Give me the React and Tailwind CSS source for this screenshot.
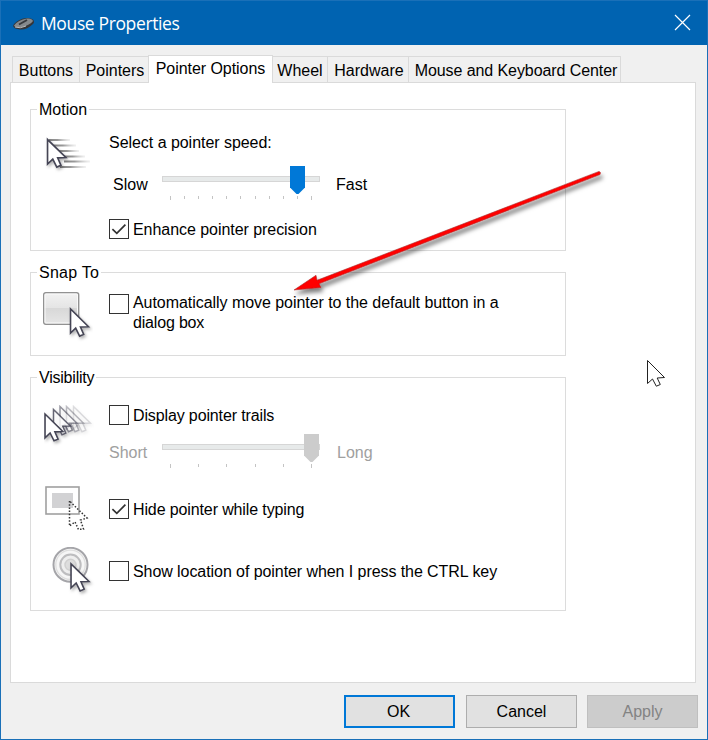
import React from "react";

const CURSOR = "M0.5 0.5V23L5.3 18.4L9 25.8L12.8 24.2L9.8 17.3L17.3 17Z";

function Group({ title, className, titleClass = "", children }) {
  return (
    <section className={"w-[536px] border border-[#dcdcdc] " + className}>
      <div className={"-mt-[11px] ml-[6px] h-[20px] w-fit bg-white px-[2px] leading-[22px] " + titleClass}>{title}</div>
      {children}
    </section>
  );
}

function Check({ checked, className = "", children }) {
  return (
    <label className="flex h-[20px] items-start gap-[4px]">
      <span className="h-[20px] w-[20px] shrink-0 border border-[#333] bg-white">
        {checked && (
          <svg width="18" height="18" viewBox="0 0 18 18" fill="none" className="block">
            <path d="M2.4 9.2L6.8 13.4L15.4 4.6" stroke="#333" strokeWidth="1.7" />
          </svg>
        )}
      </span>
      <span className={"whitespace-nowrap " + className}>{children}</span>
    </label>
  );
}

function Slider({ count, disabled }) {
  return (
    <div className="relative h-[34px] w-[158px] pt-[10px]">
      <div className="h-[6px] border border-[#d6d6d6] bg-[#e7eaea]" />
      <div className="mt-[14px] ml-[8px] flex w-[142px] justify-between">
        {Array.from({ length: count }, (_, i) => (
          <i key={i} className={"w-px bg-[#c4c4c4] " + (i === 0 || i === count - 1 ? "h-[4px]" : "h-[3px]")} />
        ))}
      </div>
      <svg
        width="15"
        height="28"
        viewBox="0 0 15 28"
        className={"absolute top-0 " + (disabled ? "left-[142px]" : "left-[128px]")}
      >
        <path d="M0 0H15V21.5L8.5 28H6.5L0 21.5Z" fill={disabled ? "#cccccc" : "#0078d7"} />
      </svg>
    </div>
  );
}

function Pointer({ x, y, scale = 1, opacity = 1, stroke = "#454555" }) {
  return (
    <path
      d={CURSOR}
      transform={`translate(${x} ${y}) scale(${scale})`}
      fill="#fff"
      stroke={stroke}
      strokeWidth="1.5"
      opacity={opacity}
    />
  );
}

function Defs({ id }) {
  return (
    <defs>
      <linearGradient id={id + "g"} x1="0" y1="0" x2="1" y2="0">
        <stop offset="0" stopColor="#858585" />
        <stop offset=".4" stopColor="#999" />
        <stop offset="1" stopColor="#ddd" stopOpacity=".4" />
      </linearGradient>
      <linearGradient id={id + "b"} x1="0" y1="0" x2="0" y2="1">
        <stop offset="0" stopColor="#f2f2f2" />
        <stop offset=".5" stopColor="#e4e4e4" />
        <stop offset=".5" stopColor="#d8d8d8" />
        <stop offset="1" stopColor="#e6e6e6" />
      </linearGradient>
      <filter id={id + "s"} x="-30%" y="-30%" width="180%" height="180%">
        <feDropShadow dx="1.5" dy="2" stdDeviation="1.5" floodOpacity=".3" />
      </filter>
    </defs>
  );
}

function MotionIcon() {
  return (
    <svg width="50" height="50" viewBox="0 0 50 50">
      <Defs id="m" />
      {[[5, 7, 28], [10.5, 12, 34], [16, 17, 37], [21.5, 22, 43], [26.5, 22, 48], [32, 18, 44]].map(([y, x, end]) => (
        <rect key={y} x={x} y={y} width={end - x} height="2" fill="url(#mg)" />
      ))}
      <g filter="url(#ms)"><Pointer x={5} y={5} scale={1.09} /></g>
    </svg>
  );
}

function SnapIcon() {
  return (
    <svg width="50" height="50" viewBox="0 0 50 50">
      <Defs id="n" />
      <rect x="0.7" y="0.7" width="35" height="31.6" rx="2" fill="url(#nb)" stroke="#929292" strokeWidth="1.4" />
      <rect x="2" y="2" width="32.5" height="29" rx="1" fill="none" stroke="#fafafa" />
      <g filter="url(#ns)"><Pointer x={27} y={16.5} scale={1.07} /></g>
    </svg>
  );
}

function TrailsIcon() {
  return (
    <svg width="50" height="50" viewBox="0 0 50 50">
      <Defs id="t" />
      <g filter="url(#ts)">
        <Pointer x={29} y={1} opacity={0.18} />
        <Pointer x={22} y={1} opacity={0.35} />
        <Pointer x={15.5} y={1} opacity={0.55} />
        <Pointer x={9} y={4} opacity={0.8} />
        <Pointer x={0.5} y={8.5} scale={1.06} />
      </g>
    </svg>
  );
}

function HideIcon() {
  return (
    <svg width="50" height="50" viewBox="0 0 50 50">
      <rect x="1" y="1" width="33" height="27" fill="#fff" stroke="#a0a0a0" strokeWidth="1.6" />
      <rect x="7" y="7" width="21" height="15" fill="#d2d2d4" />
      <path
        d="M24.5 15V40L30 36L33.5 43.5L38.5 43L35.5 34L42 32Z"
        fill="none"
        stroke="#333"
        strokeWidth="1.5"
        strokeDasharray="1.5 1.7"
      />
    </svg>
  );
}

function LocateIcon() {
  return (
    <svg width="50" height="50" viewBox="0 0 50 50">
      <Defs id="l" />
      <circle cx="18.5" cy="17.8" r="17" fill="#f6f6f6" stroke="#a5a5a9" strokeWidth="2" />
      <circle cx="18.5" cy="17.8" r="14.7" fill="none" stroke="#dedede" strokeWidth="1.3" />
      <circle cx="18.5" cy="17.8" r="10.2" fill="#eee" stroke="#bdbdbf" strokeWidth="2" />
      <circle cx="18.5" cy="17.8" r="5.5" fill="#ddd" stroke="#d0d0d0" strokeWidth="1.5" />
      <g filter="url(#ls)"><Pointer x={18.5} y={16.3} scale={1.07} /></g>
    </svg>
  );
}

const TAB = "h-[26px] border border-b-0 border-[#dadada] text-center leading-[28px] whitespace-nowrap ";

export default function App() {
  return (
    <div className="relative flex h-[740px] w-[708px] flex-col border border-[#1a70b8] bg-[#f0f0f0] font-['Liberation_Sans',Arial,sans-serif] text-[16px] leading-[20px] text-black">
      <header className="flex h-[44px] shrink-0 items-center bg-[#0063b1] pl-[12px] text-white">
        <svg width="22" height="14" viewBox="0 0 22 14" className="mt-[2px] shrink-0">
          <path d="M0 9Q2 4 10 1.5Q17 0 20 2.5Q22 5 20 7Q14 13 7 12.5Q1 12 0 9Z" fill="#353638" />
          <path d="M1 8.5Q5 3 14 1.5Q19 1 20 4Q17 8 9 10Q2 11 1 8.5Z" fill="#85898c" />
          <path d="M6 7.5L14 3" stroke="#37393c" strokeWidth="2" fill="none" />
          <path d="M2 10Q7 12 13 9" stroke="#bbb" fill="none" />
        </svg>
        <h1 className="ml-[6px] font-['Open_Sans',sans-serif] text-[17.5px] tracking-[-0.37px]">Mouse Properties</h1>
        <svg width="17" height="17" viewBox="0 0 17 17" className="mr-[16px] mb-px ml-auto">
          <path d="M1 1L16 16M16 1L1 16" stroke="#fff" strokeWidth="1.2" />
        </svg>
      </header>

      <nav className="mt-[10px] ml-[11px] flex h-[27px] shrink-0 items-end">
        <div className={TAB + "w-[68px]"}>Buttons</div>
        <div className={TAB + "w-[68px] border-x-0 pl-[2px]"}>Pointers</div>
        <div className="z-10 -mb-px h-[28px] w-[125px] border border-b-0 border-[#dadada] bg-white text-center leading-[26px] tracking-[-0.05px] whitespace-nowrap">
          Pointer Options
        </div>
        <div className={TAB + "w-[55px] border-l-0"}>Wheel</div>
        <div className={TAB + "w-[81px] border-l-0 pl-[2px]"}>Hardware</div>
        <div className={TAB + "w-[212px] border-l-0 pl-[3px] tracking-[-0.08px]"}>Mouse and Keyboard Center</div>
      </nav>

      <main className="ml-[9px] flex h-[601px] w-[686px] shrink-0 flex-col gap-[21px] border border-[#dadada] bg-white pt-[26px] pl-[19px]">
        <Group title="Motion" className="h-[142px]">
          <div className="flex pl-[11px]">
            <div className="w-[67px] pt-[15px]"><MotionIcon /></div>
            <div className="pt-[13px]">
              <p className="h-[20px] leading-[22px] tracking-[-0.04px]">Select a pointer speed:</p>
              <div className="mt-[14px] flex pl-[4px]">
                <span className="mt-[9px] w-[49px]">Slow</span>
                <Slider count={11} />
                <span className="mt-[9px] ml-[16px]">Fast</span>
              </div>
              <div className="mt-[19px]">
                <Check checked className="leading-[22px] tracking-[-0.05px]">Enhance pointer precision</Check>
              </div>
            </div>
          </div>
        </Group>

        <Group title="Snap To" className="h-[84px]" titleClass="tracking-[0.25px]">
          <div className="flex pl-[12px]">
            <div className="w-[66px] pt-[10px]"><SnapIcon /></div>
            <div className="pt-[12px]">
              <Check className="-mt-px leading-[20px] tracking-[-0.05px]">
                Automatically move pointer to the default button in a
                <br />
                <span className="tracking-[-0.18px]">dialog box</span>
              </Check>
            </div>
          </div>
        </Group>

        <Group title="Visibility" className="h-[234px]" titleClass="tracking-[-0.22px]">
          <div className="flex pl-[13px]">
            <div className="w-[65px] pt-[18px]"><TrailsIcon /></div>
            <div className="pt-[18px]">
              <Check className="leading-[22px] tracking-[-0.13px]">Display pointer trails</Check>
              <div className="mt-[9px] flex text-[#a0a0a0]">
                <span className="mt-[9px] w-[53px]">Short</span>
                <Slider count={6} disabled />
                <span className="mt-[9px] ml-[17px]">Long</span>
              </div>
            </div>
          </div>
          <div className="mt-[18px] flex pl-[14px]">
            <div className="w-[64px]"><HideIcon /></div>
            <div className="pt-[13px]">
              <Check checked className="leading-[22px] tracking-[-0.12px]">Hide pointer while typing</Check>
            </div>
          </div>
          <div className="mt-[11px] flex pl-[21px]">
            <div className="w-[57px]"><LocateIcon /></div>
            <div className="pt-[14px]">
              <Check className="leading-[22px] tracking-[-0.07px]">Show location of pointer when I press the CTRL key</Check>
            </div>
          </div>
        </Group>
      </main>

      <footer className="mt-[12px] mr-[9px] flex shrink-0 justify-end">
        <button className="mr-[11px] h-[33px] w-[111px] border-2 border-[#0078d7] bg-[#e1e1e1] pr-[2px]">OK</button>
        <button className="mr-[10px] h-[33px] w-[111px] border border-[#adadad] bg-[#e1e1e1]">Cancel</button>
        <button className="h-[33px] w-[111px] border border-[#bfbfbf] bg-[#cccccc] text-[#838383]">Apply</button>
      </footer>

      <svg width="708" height="740" viewBox="0 0 708 740" className="pointer-events-none absolute -top-px -left-px z-20">
        <defs>
          <filter id="shadow" x="-5%" y="-10%" width="115%" height="125%">
            <feDropShadow dx="2" dy="4" stdDeviation="2" floodOpacity=".5" />
          </filter>
        </defs>
        <g filter="url(#shadow)" fill="#f00" stroke="#a83232" strokeWidth=".6">
          <path d="M294 290L316 275.3L317 280.3L599 171.4Q601.3 171.8 600 174.6L319 283.8L321 287.5Z" />
        </g>
        <path
          d="M647.5 360.5V383.5L652.5 379L656.3 386.2L660.3 384.5L657.2 378L664.5 377.5Z"
          fill="#fff"
          stroke="#222"
          strokeWidth="1"
        />
      </svg>
    </div>
  );
}
